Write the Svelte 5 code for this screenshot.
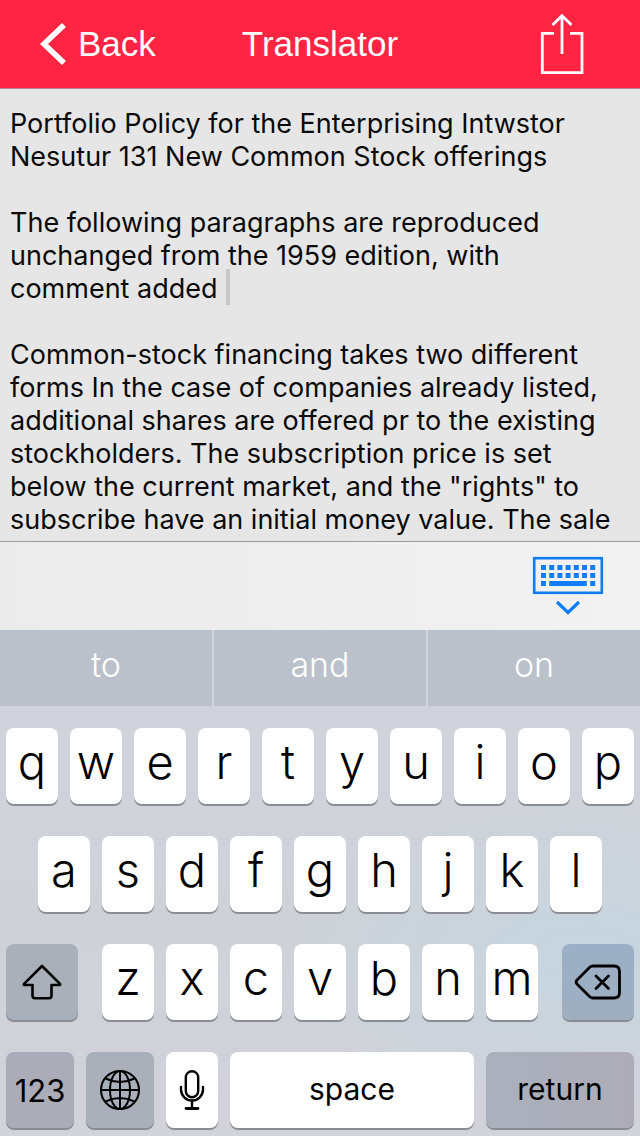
<script>
  let text = $state(
    [
      'Portfolio Policy for the Enterprising Intwstor',
      'Nesutur 131 New Common Stock offerings',
      '',
      'The following paragraphs are reproduced unchanged from the 1959 edition, with comment added',
      '',
      'Common-stock financing takes two different forms In the case of companies already listed, additional shares are offered pr to the existing stockholders. The subscription price is set below the current market, and the "rights" to subscribe have an initial money value. The sale'
    ].join('\n')
  );

  const suggestions = ['to', 'and', 'on'];
  const topRow = [...'qwertyuiop'];
  const homeRow = [...'asdfghjkl'];
  const bottomRow = [...'zxcvbnm'];

  function type(s) {
    text += s;
  }
</script>

<div class="screen">
  <header>
    <button class="back">
      <svg width="26" height="42" viewBox="0 0 26 42" aria-hidden="true">
        <path d="M24 2 L4 21 L24 40" fill="none" stroke="#fff" stroke-width="5.6" />
      </svg>
      Back
    </button>
    <h1>Translator</h1>
    <button class="share" aria-label="Share">
      <svg width="44" height="62" viewBox="0 0 44 62" fill="none" stroke="#fff" stroke-width="2.8">
        <path d="M14 20.3 H2.3 V59.7 H42 V20.3 H30" />
        <path d="M22 41 V3 M12.5 12 L22 2.8 L31.5 12" />
      </svg>
    </button>
  </header>

  <main>
    <textarea aria-label="Text to translate" spellcheck="false" bind:value={text}></textarea>
    <span class="caret"></span>
  </main>

  <div class="toolbar">
    <button aria-label="Hide keyboard">
      <svg width="72" height="60" viewBox="0 0 72 60" aria-hidden="true">
        <rect x="2.2" y="2.2" width="67.6" height="34.6" fill="none" stroke="#0f7df5" stroke-width="2.6" />
        {#each [0, 1, 2, 3, 4, 5, 6] as col}
          <rect x={9 + col * 8.2} y="9" width="5" height="5" fill="#0f7df5" />
          <rect x={9 + col * 8.2} y="17" width="5" height="5" fill="#0f7df5" />
        {/each}
        <path d="M9 25h5v5h-5z M17.2 25h37.6v5h-37.6z M58.2 25h5v5h-5z" fill="#0f7df5" />
        <path d="M25 46 L36 56.5 L47 46" fill="none" stroke="#0f7df5" stroke-width="3.2" />
      </svg>
    </button>
  </div>

  <div class="suggestions">
    {#each suggestions as word}
      <button onclick={() => type(' ' + word)}>{word}</button>
    {/each}
  </div>

  <div class="keyboard">
    <div class="row top">
      {#each topRow as key}
        <button class="key" onclick={() => type(key)}>{key}</button>
      {/each}
    </div>

    <div class="row home">
      {#each homeRow as key}
        <button class="key" onclick={() => type(key)}>{key}</button>
      {/each}
    </div>

    <div class="row bottom">
      <button class="key dark" aria-label="Shift">
        <svg width="40" height="36" viewBox="0 0 40 36" aria-hidden="true">
          <path
            d="M20 2 L38 19.8 Q38.6 21 37.5 21 H29.5 V31.5 Q29.5 34.2 27 34.2 H13 Q10.5 34.2 10.5 31.5 V21 H2.5 Q1.4 21 2 19.8 Z"
            fill="none"
            stroke="#000"
            stroke-width="2.6"
            stroke-linejoin="round"
          />
        </svg>
      </button>
      <div class="letters">
        {#each bottomRow as key}
          <button class="key" onclick={() => type(key)}>{key}</button>
        {/each}
      </div>
      <button class="key dark delete" aria-label="Delete" onclick={() => (text = text.slice(0, -1))}>
        <svg width="48" height="36" viewBox="0 0 48 36" fill="none" stroke="#000" stroke-width="2.8">
          <path
            d="M19 2 H40 Q45.5 2 45.5 7.5 V28.5 Q45.5 34 40 34 H19 Q17 34 15.5 32.5 L3 20 Q1.2 18 3 16 L15.5 3.5 Q17 2 19 2 Z"
            stroke-linejoin="round"
          />
          <path d="M22 12 L34.5 24.5 M34.5 12 L22 24.5" stroke-linecap="round" />
        </svg>
      </button>
    </div>

    <div class="row actions">
      <button class="key dark word numbers">123</button>
      <button class="key dark" aria-label="Next keyboard">
        <svg width="42" height="42" viewBox="0 0 42 42" fill="none" stroke="#000" stroke-width="2">
          <circle cx="21" cy="21" r="19" />
          <ellipse cx="21" cy="21" rx="10" ry="19" />
          <path d="M21 2 V40 M2 21 H40 M6.5 9.5 Q21 16.5 35.5 9.5 M6.5 32.5 Q21 25.5 35.5 32.5" />
        </svg>
      </button>
      <button class="key mic" aria-label="Dictate">
        <svg width="26" height="42" viewBox="0 0 26 42" fill="none" stroke="#000" stroke-width="2.4">
          <rect x="6.8" y="2.2" width="12.4" height="26" rx="6.2" />
          <path d="M2 18 V20.5 A11 11 0 0 0 24 20.5 V18 M13 31.5 V39" stroke-linecap="round" />
          <path d="M7 39.5 H19" stroke-width="2.8" stroke-linecap="round" />
        </svg>
      </button>
      <button class="key word" onclick={() => type(' ')}>space</button>
      <button class="key dark word return" onclick={() => type('\n')}>return</button>
    </div>
  </div>
</div>

<style>
  :global(body) {
    margin: 0;
    background: #d0d3da;
  }

  .screen {
    display: flex;
    flex-direction: column;
    min-height: 100vh;
    font-family: Inter, 'Liberation Sans', sans-serif;
  }

  button {
    margin: 0;
    padding: 0;
    border: 0;
    background: none;
    color: inherit;
    font: inherit;
    cursor: pointer;
  }

  svg {
    display: block;
  }

  header {
    display: grid;
    grid-template-columns: 1fr auto 1fr;
    align-items: center;
    height: 89px;
    box-sizing: border-box;
    padding: 0 40px;
    border-bottom: 1px solid #b58a8f;
    background: #ff2442;
    color: #fff;
    font-family: 'Liberation Sans', Arial, sans-serif;
    font-size: 35px;
  }

  .back {
    display: flex;
    align-items: center;
    justify-self: start;
    gap: 12px;
  }

  h1 {
    margin: 0;
    font-size: 35px;
    font-weight: 400;
  }

  .share {
    justify-self: end;
    padding-right: 16px;
  }

  main {
    position: relative;
    display: flex;
    flex: 1;
    min-height: 452px;
    background: #e6e6e6;
  }

  textarea {
    flex: 1;
    box-sizing: border-box;
    margin: 0;
    padding: 18px 20px 0 10px;
    border: 0;
    outline: 0;
    overflow: hidden;
    resize: none;
    background: none;
    color: #0a0a0a;
    font: 400 27px/33px Inter, 'Liberation Sans', sans-serif;
  }

  .caret {
    position: absolute;
    left: 226px;
    top: 180px;
    width: 4px;
    height: 36px;
    background: #c8c8c8;
  }

  .toolbar {
    display: flex;
    align-items: center;
    justify-content: flex-end;
    height: 89px;
    box-sizing: border-box;
    padding: 0 36px;
    border-top: 1px solid #9a9a9a;
    background: linear-gradient(90deg, #ebebeb, #f2f2f2);
  }

  .suggestions {
    display: grid;
    grid-template-columns: repeat(3, 1fr);
    gap: 2px;
    height: 76px;
    background: #d0d3da;
  }

  .suggestions button {
    padding-bottom: 8px;
    background: #bbc1ca;
    color: #fff;
    font-size: 34px;
    font-weight: 300;
  }

  .keyboard {
    display: grid;
    gap: 32px;
    padding: 22px 6px 8px;
    background:
      radial-gradient(ellipse 50% 36% at 92% 58%, #c6d5e0, transparent),
      linear-gradient(#d1d3dc, #ced2d7 50%, #d2d2da);
  }

  .row {
    display: grid;
    gap: 12px;
    height: 76px;
  }

  .top {
    grid-template-columns: repeat(10, 1fr);
  }

  .home {
    grid-template-columns: repeat(9, 1fr);
    padding: 0 32px;
  }

  .bottom {
    grid-template-columns: 72fr 436fr 72fr;
    gap: 24px;
  }

  .letters {
    display: grid;
    grid-template-columns: repeat(7, 1fr);
    gap: 12px;
  }

  .actions {
    grid-template-columns: 68fr 68fr 52fr 244fr 148fr;
  }

  .key {
    display: flex;
    align-items: center;
    justify-content: center;
    min-width: 0;
    box-sizing: border-box;
    padding-bottom: 10px;
    border-radius: 8px;
    background: #fff;
    box-shadow: 0 2px 0 #898c92;
    color: #000;
    font-size: 47px;
    font-weight: 300;
    line-height: 1;
  }

  .key.dark,
  .key.mic {
    padding-bottom: 0;
  }

  .key.dark {
    background: #a9b0b9;
  }

  .key.delete {
    background: linear-gradient(#9ab0c6, #a0aec0);
  }

  .key.return {
    background: linear-gradient(90deg, #a9b1bc, #aeabb8);
  }

  .key.word {
    padding-bottom: 2px;
    font-size: 30px;
    font-weight: 400;
  }

  .key.numbers {
    padding-bottom: 0;
    background: #abacb8;
    font-size: 31px;
  }
</style>
